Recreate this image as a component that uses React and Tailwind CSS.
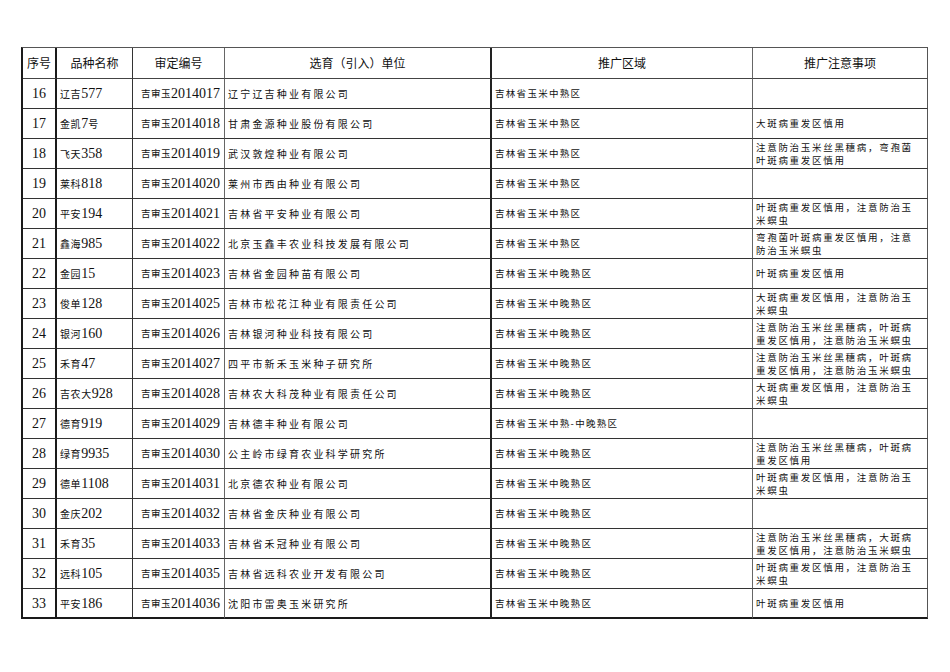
import React from "react";

const rows = [
  ["16", "辽吉577", "吉审玉2014017", "辽宁辽吉种业有限公司", "吉林省玉米中熟区", []],
  ["17", "金凯7号", "吉审玉2014018", "甘肃金源种业股份有限公司", "吉林省玉米中熟区", ["大斑病重发区慎用"]],
  ["18", "飞天358", "吉审玉2014019", "武汉敦煌种业有限公司", "吉林省玉米中熟区", ["注意防治玉米丝黑穗病，弯孢菌", "叶斑病重发区慎用"]],
  ["19", "莱科818", "吉审玉2014020", "莱州市西由种业有限公司", "吉林省玉米中熟区", []],
  ["20", "平安194", "吉审玉2014021", "吉林省平安种业有限公司", "吉林省玉米中熟区", ["叶斑病重发区慎用，注意防治玉", "米螟虫"]],
  ["21", "鑫海985", "吉审玉2014022", "北京玉鑫丰农业科技发展有限公司", "吉林省玉米中熟区", ["弯孢菌叶斑病重发区慎用，注意", "防治玉米螟虫"]],
  ["22", "金园15", "吉审玉2014023", "吉林省金园种苗有限公司", "吉林省玉米中晚熟区", ["叶斑病重发区慎用"]],
  ["23", "俊单128", "吉审玉2014025", "吉林市松花江种业有限责任公司", "吉林省玉米中晚熟区", ["大斑病重发区慎用，注意防治玉", "米螟虫"]],
  ["24", "银河160", "吉审玉2014026", "吉林银河种业科技有限公司", "吉林省玉米中晚熟区", ["注意防治玉米丝黑穗病，叶斑病", "重发区慎用，注意防治玉米螟虫"]],
  ["25", "禾育47", "吉审玉2014027", "四平市新禾玉米种子研究所", "吉林省玉米中晚熟区", ["注意防治玉米丝黑穗病，叶斑病", "重发区慎用，注意防治玉米螟虫"]],
  ["26", "吉农大928", "吉审玉2014028", "吉林农大科茂种业有限责任公司", "吉林省玉米中晚熟区", ["大斑病重发区慎用，注意防治玉", "米螟虫"]],
  ["27", "德育919", "吉审玉2014029", "吉林德丰种业有限公司", "吉林省玉米中熟-中晚熟区", []],
  ["28", "绿育9935", "吉审玉2014030", "公主岭市绿育农业科学研究所", "吉林省玉米中晚熟区", ["注意防治玉米丝黑穗病，叶斑病", "重发区慎用"]],
  ["29", "德单1108", "吉审玉2014031", "北京德农种业有限公司", "吉林省玉米中晚熟区", ["叶斑病重发区慎用，注意防治玉", "米螟虫"]],
  ["30", "金庆202", "吉审玉2014032", "吉林省金庆种业有限公司", "吉林省玉米中晚熟区", []],
  ["31", "禾育35", "吉审玉2014033", "吉林省禾冠种业有限公司", "吉林省玉米中晚熟区", ["注意防治玉米丝黑穗病，大斑病", "重发区慎用，注意防治玉米螟虫"]],
  ["32", "远科105", "吉审玉2014035", "吉林省远科农业开发有限公司", "吉林省玉米中晚熟区", ["叶斑病重发区慎用，注意防治玉", "米螟虫"]],
  ["33", "平安186", "吉审玉2014036", "沈阳市雷奥玉米研究所", "吉林省玉米中晚熟区", ["叶斑病重发区慎用"]],
];

function Mixed({ text, cjk, lat }) {
  const parts = text.split(/([0-9A-Za-z]+)/).filter(Boolean);
  return (
    <>
      {parts.map((p, i) =>
        /[0-9A-Za-z]/.test(p) ? (
          <span key={i} className={lat}>
            {p}
          </span>
        ) : (
          <span key={i} className={cjk}>
            {p}
          </span>
        )
      )}
    </>
  );
}

const CJK = "font-['Noto_Sans_CJK_SC',sans-serif]";
const SERIF = "font-['Liberation_Serif','Noto_Sans_CJK_SC',serif]";

export default function App() {
  return (
    <div className="w-[950px] h-[672px] bg-white text-[#111]">
      <div className="ml-[21px] pt-[47px] w-[907px]">
        <div className="grid grid-cols-[34px_76px_92px_267px_261px_175px] border-l-2 border-t border-l-[#1a1a1a] border-t-[#555] w-[907px]">
          {/* header */}
          <div className={`h-[31px] flex items-center justify-center border-r-2 border-b border-r-[#1a1a1a] border-b-[#444] text-[12px] ${CJK}`}>序号</div>
          <div className={`h-[31px] flex items-center justify-center border-r border-b border-r-[#333] border-b-[#444] text-[12px] ${CJK}`}>品种名称</div>
          <div className={`h-[31px] flex items-center justify-center border-r border-b border-r-[#666] border-b-[#444] text-[12px] ${CJK}`}>审定编号</div>
          <div className={`h-[31px] flex items-center justify-center border-r-2 border-b border-r-[#222] border-b-[#444] text-[12px] ${CJK}`}>选育（引入）单位</div>
          <div className={`h-[31px] flex items-center justify-center border-r border-b border-r-[#666] border-b-[#444] text-[12px] ${CJK}`}>推广区域</div>
          <div className={`h-[31px] flex items-center justify-center border-r border-b border-r-[#555] border-b-[#444] text-[12px] ${CJK}`}>推广注意事项</div>

          {rows.map((r, idx) => {
            const last = idx === rows.length - 1;
            const hb = last ? "border-b-2 border-b-[#1a1a1a]" : "border-b border-b-[#333]";
            return (
              <React.Fragment key={r[0]}>
                <div className={`h-[30px] flex items-center justify-center border-r-2 border-r-[#1a1a1a] ${hb} text-[14px] ${SERIF}`}>
                  {r[0]}
                </div>
                <div className={`h-[30px] flex items-center pl-[3px] border-r border-r-[#333] ${hb} whitespace-nowrap`}>
                  <Mixed text={r[1]} cjk={`text-[10px] tracking-[0.6px] ${CJK}`} lat={`text-[14px] ${SERIF}`} />
                </div>
                <div className={`h-[30px] flex items-center pl-[8px] border-r border-r-[#666] ${hb} whitespace-nowrap`}>
                  <Mixed text={r[2]} cjk={`text-[9.5px] tracking-[0.5px] ${CJK}`} lat={`text-[14px] ${SERIF}`} />
                </div>
                <div className={`h-[30px] flex items-center pl-[3px] border-r-2 border-r-[#222] ${hb} whitespace-nowrap text-[10px] tracking-[2.2px] ${CJK}`}>
                  {r[3]}
                </div>
                <div className={`h-[30px] flex items-center pl-[3px] border-r border-r-[#666] ${hb} whitespace-nowrap text-[9.5px] tracking-[1.3px] ${CJK}`}>
                  {r[4]}
                </div>
                <div className={`h-[30px] flex flex-col justify-center pl-[3px] border-r border-r-[#555] ${hb} whitespace-nowrap text-[9.5px] leading-[13px] tracking-[1.7px] ${CJK}`}>
                  {r[5].map((l, i) => (
                    <div key={i}>{l}</div>
                  ))}
                </div>
              </React.Fragment>
            );
          })}
        </div>
      </div>
    </div>
  );
}
